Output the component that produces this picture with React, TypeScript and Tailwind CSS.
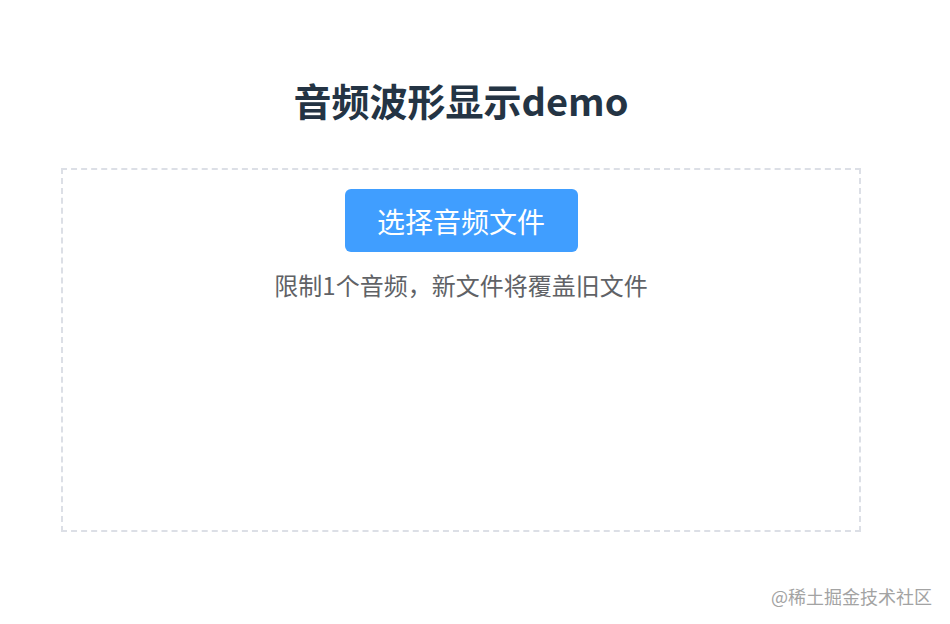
export default function App() {
  return (
    <div className="min-h-[624px] w-[950px] bg-white relative font-['Noto_Sans_CJK_SC',sans-serif]">
      <div className="w-[800px] ml-[61px] pt-[76px] flex flex-col">
        <h1 className="text-center text-[38px] leading-[48px] font-bold text-[#243444] h-[48px]">
          音频波形显示demo
        </h1>
        <div className="mt-[44px] h-[364px] border-2 border-dashed border-[#dcdfe6] flex flex-col items-center pt-[19px]">
          <button className="w-[233px] h-[63px] rounded-[6px] bg-[#409eff] text-white text-[28px] leading-none flex items-center justify-center">
            选择音频文件
          </button>
          <p className="mt-[17px] text-[24px] leading-[32px] text-[#606266]">
            限制1个音频，新文件将覆盖旧文件
          </p>
        </div>
      </div>
      <div className="absolute right-[18px] bottom-[16px] text-[18px] leading-[24px] text-[#a3a3a3]">
        @稀土掘金技术社区
      </div>
    </div>
  );
}
